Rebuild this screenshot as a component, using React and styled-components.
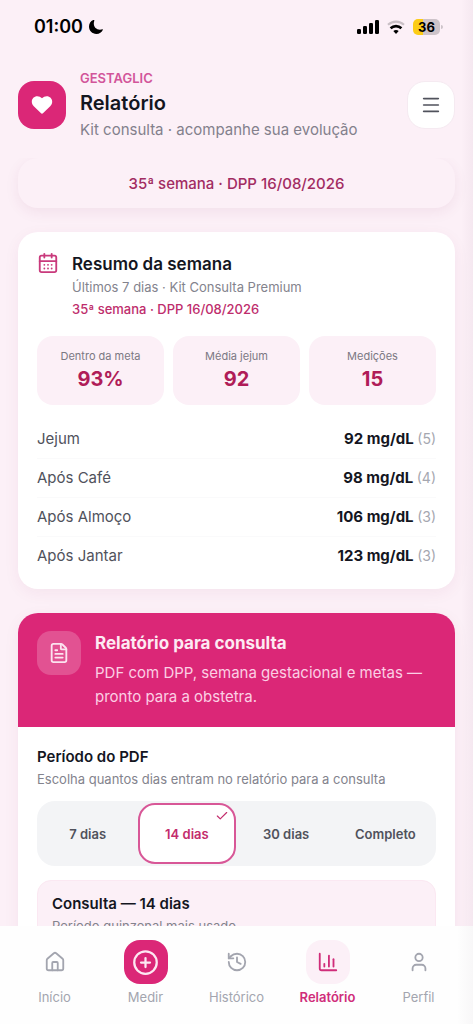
import React, { useState } from "react";
import styled, { createGlobalStyle } from "styled-components";
import { CalendarDays, ChartColumn, Check, CirclePlus, FileText, History, House, Menu, User } from "lucide-react";

const GlobalStyle = createGlobalStyle`
  *, *::before, *::after { box-sizing: border-box; }
  body {
    margin: 0;
    background: #fcf0f7;
    color: #14161f;
    font-family: Inter, "Liberation Sans", sans-serif;
    -webkit-font-smoothing: antialiased;
  }
  h1, h2, h3, p, dl, dd, dt { margin: 0; padding: 0; }
  button { font: inherit; border: 0; padding: 0; cursor: pointer; }
  a { color: inherit; text-decoration: none; }
`;

const Screen = styled.div`
  height: 100vh;
  display: flex;
  flex-direction: column;
  background: linear-gradient(to left, #f5e8f0, #fcf0f7 12px);
`;

const StatusBar = styled.div`
  display: flex;
  align-items: center;
  justify-content: space-between;
  padding: 16px 33px 0 34px;
  color: #000;
`;

const StatusGroup = styled.div`
  display: flex;
  align-items: center;
  gap: ${(p) => p.$gap}px;
`;

const Clock = styled.span`
  font-size: 18px;
  line-height: 22px;
  font-weight: 600;
`;

const Battery = styled.span`
  position: relative;
  width: 27px;
  height: 16px;
  border-radius: 5px;
  background: linear-gradient(to right, #fccc16 38%, #cdc3c9 38%);
  font-size: 13px;
  line-height: 16px;
  font-weight: 700;
  text-align: center;

  &::after {
    content: "";
    position: absolute;
    top: 6px;
    right: -3px;
    width: 2px;
    height: 4px;
    border-radius: 0 2px 2px 0;
    background: #cdc3c9;
  }
`;

const Header = styled.header`
  display: flex;
  align-items: center;
  gap: 14px;
  padding: 31px 18px 17px;
`;

const Logo = styled.div`
  width: 48px;
  height: 48px;
  flex: none;
  display: grid;
  place-items: center;
  border-radius: 16px;
  background: #db2777;
`;

const HeaderText = styled.div`
  flex: 1;
  min-width: 0;
`;

const Eyebrow = styled.p`
  font-size: 13px;
  line-height: 18px;
  font-weight: 600;
  color: #d2559a;
`;

const PageTitle = styled.h1`
  font-size: 20px;
  line-height: 32px;
  font-weight: 600;
`;

const Subtitle = styled.p`
  font-size: 15px;
  line-height: 22px;
  color: #83808c;
`;

const MenuButton = styled.button`
  width: 48px;
  height: 48px;
  flex: none;
  display: grid;
  place-items: center;
  border: 1px solid #f5eaf1;
  border-radius: 18px;
  background: #fff;
  color: #50525c;
`;

const Content = styled.main`
  flex: 1;
  min-height: 0;
  overflow-y: auto;
  scrollbar-width: none;
  display: flex;
  flex-direction: column;
  gap: 24px;
  padding: 0 18px 24px;
`;

const Banner = styled.p`
  flex: none;
  padding: 15px 14px 13px;
  border-radius: 20px;
  background: #fcf0f7;
  box-shadow: 0 4px 14px rgba(130, 40, 90, 0.08);
  font-size: 15px;
  line-height: 22px;
  font-weight: 500;
  text-align: center;
  color: #a22c62;
`;

const Card = styled.section`
  flex: none;
  overflow: hidden;
  border-radius: 20px;
  background: #fff;
  box-shadow: 0 4px 16px rgba(130, 40, 90, 0.06);
`;

const CardBody = styled.div`
  padding: 19px;
`;

const SummaryHead = styled.div`
  display: flex;
  gap: 13px;
  padding-top: 1px;
  color: #c93a7c;
`;

const SectionTitle = styled.h2`
  font-size: 17px;
  line-height: 24px;
  font-weight: ${(p) => (p.$onColor ? 700 : 600)};
  color: ${(p) => (p.$onColor ? "#fdeaf3" : "#14161f")};
`;

const Note = styled.p`
  font-size: 13px;
  line-height: 22px;
  font-weight: ${(p) => (p.$accent ? 500 : 400)};
  color: ${(p) => (p.$accent ? "#be2d6c" : "#83838d")};
`;

const Stats = styled.dl`
  display: grid;
  grid-template-columns: repeat(3, 1fr);
  gap: 9px;
  padding-top: 16px;
`;

const Stat = styled.div`
  padding: 12px 4px 11px;
  border-radius: 16px;
  background: #fcf0f7;
  text-align: center;

  dt { font-size: 11px; line-height: 16px; color: #7b7883; }
  dd { font-size: 20px; line-height: 30px; font-weight: 700; color: #b01c58; }
`;

const Readings = styled.table`
  width: 100%;
  margin-top: 15px;
  border-spacing: 0;

  th, td { padding: 8px 0; font-size: 15px; line-height: 22px; border-bottom: 1px solid #fafafb; }
  tr:last-child > * { border-bottom: 0; padding-bottom: 3px; }
  th { text-align: left; font-weight: 400; color: #50525c; }
  td { text-align: right; font-weight: 700; }
  td span { font-size: 14px; font-weight: 400; color: #a5a7b0; }
`;

const ReportHead = styled.div`
  display: flex;
  align-items: flex-start;
  gap: 14px;
  padding: 18px 19px;
  background: #db2777;
  color: #fce3ef;

  p { font-size: 15px; line-height: 24px; color: #fbcfe4; padding-top: 6px; }
`;

const ReportIcon = styled.div`
  width: 44px;
  height: 44px;
  flex: none;
  display: grid;
  place-items: center;
  border-radius: 14px;
  background: rgba(255, 255, 255, 0.2);
`;

const SubTitle = styled.h3`
  font-size: 15px;
  line-height: 22px;
  font-weight: 600;
`;

const Segments = styled.div`
  display: grid;
  grid-template-columns: repeat(4, 1fr);
  gap: 2px;
  margin: 11px 0 14px;
  padding: 2px;
  border-radius: 18px;
  background: #f3f4f6;
`;

const Segment = styled.button`
  position: relative;
  height: 61px;
  border-radius: 17px;
  border: 2px solid ${(p) => (p.$on ? "#d85797" : "transparent")};
  background: ${(p) => (p.$on ? "#fff" : "transparent")};
  color: ${(p) => (p.$on ? "#c32c6c" : "#50525c")};
  font-size: 13px;
  line-height: 20px;
  font-weight: 600;

  svg { position: absolute; top: 4px; right: 5px; }
`;

const Preview = styled.div`
  padding: 12px 14px;
  border: 1px solid #fbe8f2;
  border-radius: 14px;
  background: #fcf0f7;
`;

const TabBar = styled.nav`
  display: grid;
  grid-template-columns: repeat(5, 1fr);
  padding: 14px 9px 17px;
  background: linear-gradient(to left, #f8f7f8, #fefefe 16px);
`;

const Tab = styled.a`
  display: flex;
  flex-direction: column;
  align-items: center;
  gap: 3px;
  font-size: 13px;
  line-height: 20px;
  font-weight: ${(p) => (p.$active ? 600 : 400)};
  && { color: ${(p) => (p.$active ? "#d02d7a" : "#a3a5af")}; }
`;

const TabIcon = styled.span`
  width: 44px;
  height: 44px;
  display: grid;
  place-items: center;
  border-radius: 16px;
  background: ${(p) => p.$bg || "transparent"};
  color: ${(p) => p.$fg || "inherit"};
`;

const Moon = () => (
  <svg width="16" height="16" viewBox="0 0 16 16" aria-hidden="true">
    <path fill="#000" d="M5.200 1C2.600 2.200 1 4.600 1 7.600 1 11.800 4.200 15 8.400 15c3 0 5.400-1.600 6.500-4.200.1-.4-.2-.6-.5-.5-.8.3-1.600.4-2.400.4-3.700 0-6.200-2.500-6.200-6.100 0-1.100.2-2 .6-2.900.2-.5-.6-1-1.200-.7Z" />
  </svg>
);

const Signal = () => (
  <svg width="22" height="14" viewBox="0 0 22 14" aria-hidden="true">
    <rect x="0" y="9" width="4" height="5" rx="1.200" />
    <rect x="6" y="6" width="4" height="8" rx="1.200" />
    <rect x="12" y="3" width="4" height="11" rx="1.200" />
    <rect x="18" y="0" width="4" height="14" rx="1.200" />
  </svg>
);

const Wifi = () => (
  <svg width="18" height="14" viewBox="0 0 18 14" fill="none" aria-hidden="true">
    <path d="M1 4.800a11.500 11.500 0 0 1 16 0" stroke="#c9bfc5" strokeWidth="2.200" />
    <path d="M3.600 8.300a7.800 7.800 0 0 1 10.800 0" stroke="#000" strokeWidth="2.600" />
    <path d="M9 14 6.300 11.100a4.200 4.200 0 0 1 5.400 0Z" fill="#000" />
  </svg>
);

const Heart = () => (
  <svg width="22" height="20" viewBox="0 0 22 20" aria-hidden="true">
    <path fill="#fff" d="M11 3.200C12.300 1.900 14 1.200 15.700 1.200c3.200 0 5.500 2.400 5.500 5.500 0 1.900-.8 3.300-2 4.500l-7 6.900c-.7.700-1.700.7-2.400 0l-7-6.900C1.600 10 .8 8.600.8 6.700c0-3.100 2.300-5.500 5.500-5.500 1.700 0 3.400.7 4.700 2Z" />
  </svg>
);

const readings = [
  ["Jejum", 92, 5],
  ["Após Café", 98, 4],
  ["Após Almoço", 106, 3],
  ["Após Jantar", 123, 3],
];

const stats = [
  ["Dentro da meta", "93%"],
  ["Média jejum", "92"],
  ["Medições", "15"],
];

const periods = ["7 dias", "14 dias", "30 dias", "Completo"];

const tabs = [
  { label: "Início", icon: <House size={22} /> },
  { label: "Medir", icon: <CirclePlus size={27} />, bg: "#db2777", fg: "#fde8f2" },
  { label: "Histórico", icon: <History size={22} /> },
  { label: "Relatório", icon: <ChartColumn size={22} />, active: true, bg: "#fcf0f7" },
  { label: "Perfil", icon: <User size={22} /> },
];

export default function App() {
  const [period, setPeriod] = useState("14 dias");

  return (
    <>
      <GlobalStyle />
      <Screen>
        <StatusBar>
          <StatusGroup $gap={5}>
            <Clock>01:00</Clock>
            <Moon />
          </StatusGroup>
          <StatusGroup $gap={8}>
            <Signal />
            <Wifi />
            <Battery>36</Battery>
          </StatusGroup>
        </StatusBar>

        <Header>
          <Logo><Heart /></Logo>
          <HeaderText>
            <Eyebrow>GESTAGLIC</Eyebrow>
            <PageTitle>Relatório</PageTitle>
            <Subtitle>Kit consulta · acompanhe sua evolução</Subtitle>
          </HeaderText>
          <MenuButton type="button" aria-label="Menu"><Menu size={22} strokeWidth={1.8} /></MenuButton>
        </Header>

        <Content>
          <Banner>35ª semana · DPP 16/08/2026</Banner>

          <Card>
            <CardBody>
              <SummaryHead>
                <CalendarDays size={22} />
                <div>
                  <SectionTitle>Resumo da semana</SectionTitle>
                  <Note>Últimos 7 dias · Kit Consulta Premium</Note>
                  <Note $accent>35ª semana · DPP 16/08/2026</Note>
                </div>
              </SummaryHead>
              <Stats>
                {stats.map(([label, value]) => (
                  <Stat key={label}>
                    <dt>{label}</dt>
                    <dd>{value}</dd>
                  </Stat>
                ))}
              </Stats>
              <Readings>
                <tbody>
                  {readings.map(([label, value, count]) => (
                    <tr key={label}>
                      <th scope="row">{label}</th>
                      <td>{value} mg/dL <span>({count})</span></td>
                    </tr>
                  ))}
                </tbody>
              </Readings>
            </CardBody>
          </Card>

          <Card>
            <ReportHead>
              <ReportIcon><FileText size={22} /></ReportIcon>
              <div>
                <SectionTitle $onColor>Relatório para consulta</SectionTitle>
                <p>PDF com DPP, semana gestacional e metas — pronto para a obstetra.</p>
              </div>
            </ReportHead>
            <CardBody>
              <SubTitle>Período do PDF</SubTitle>
              <Note>Escolha quantos dias entram no relatório para a consulta</Note>
              <Segments role="group" aria-label="Período do PDF">
                {periods.map((p) => (
                  <Segment key={p} type="button" $on={p === period} aria-pressed={p === period} onClick={() => setPeriod(p)}>
                    {p}
                    {p === period && <Check size={14} />}
                  </Segment>
                ))}
              </Segments>
              <Preview>
                <SubTitle>Consulta — 14 dias</SubTitle>
                <Note>Período quinzenal mais usado</Note>
              </Preview>
            </CardBody>
          </Card>
        </Content>

        <TabBar>
          {tabs.map((t) => (
            <Tab key={t.label} href="#" $active={t.active} aria-current={t.active ? "page" : undefined}>
              <TabIcon $bg={t.bg} $fg={t.fg}>{t.icon}</TabIcon>
              {t.label}
            </Tab>
          ))}
        </TabBar>
      </Screen>
    </>
  );
}
